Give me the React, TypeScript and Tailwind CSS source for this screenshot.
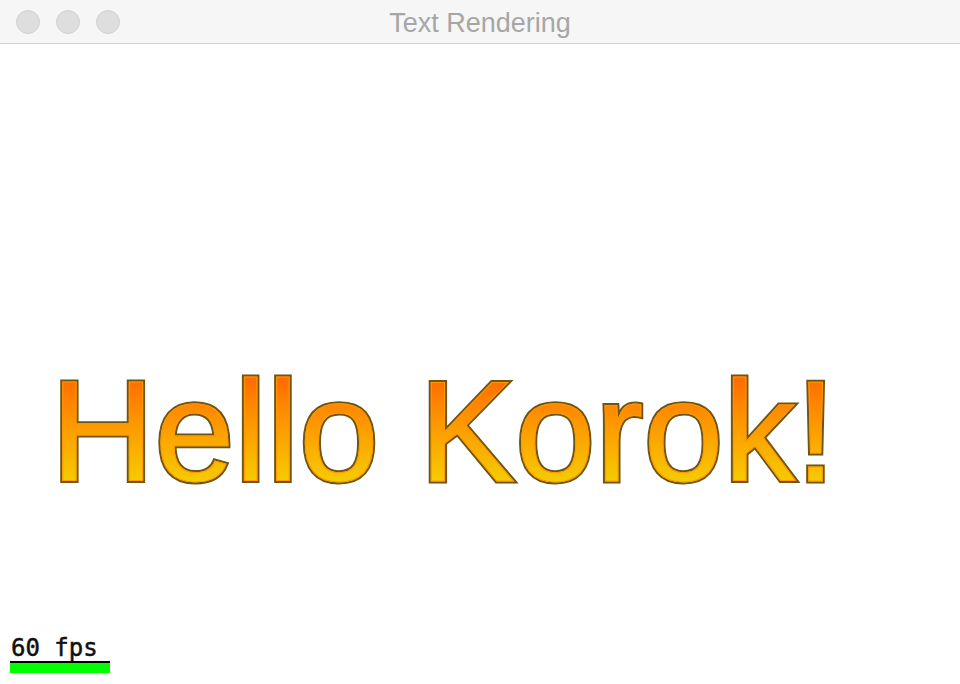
export default function App() {
  return (
    <div className="flex h-[684px] w-[960px] flex-col overflow-hidden bg-white">
      <div className="relative flex h-[44px] shrink-0 items-center border-b border-[#d3d3d3] bg-[#f6f6f6] px-[16px]">
        <div className="flex gap-[16px]">
          <span className="h-[24px] w-[24px] rounded-full border border-[#d2d2d2] bg-[#dedede]" />
          <span className="h-[24px] w-[24px] rounded-full border border-[#d2d2d2] bg-[#dedede]" />
          <span className="h-[24px] w-[24px] rounded-full border border-[#d2d2d2] bg-[#dedede]" />
        </div>
        <div className="absolute inset-x-0 top-[2px] flex h-[43px] items-center justify-center">
          <span className="font-['Liberation_Sans',Arial,sans-serif] text-[27px] leading-none text-[#a6a6a6]">
            Text Rendering
          </span>
        </div>
      </div>

      <div className="flex flex-1 flex-col">
        <div className="pl-[51px] pt-[316px]">
          {/* outline layer underneath, gradient fill on top */}
          <div className="relative inline-block font-['Liberation_Sans',Arial,sans-serif] text-[143px] leading-none tracking-[0.5px] whitespace-nowrap">
            <span className="text-[#6f5414] [-webkit-text-stroke:5px_#6f5414] blur-[0.5px]">Hello Korok!</span>
            <span className="absolute inset-0 bg-gradient-to-b from-[#ff6c00] from-[14%] to-[#f5cb00] to-[85%] bg-clip-text text-transparent [-webkit-text-stroke:1px_#ff9a00]">
              Hello Korok!
            </span>
          </div>
        </div>

        <div className="mt-auto mb-[11px] ml-[10px] flex w-[100px] flex-col">
          <span className="pl-[1px] font-['DejaVu_Sans_Mono',monospace] text-[24px] leading-[26px] text-[#111] [-webkit-text-stroke:0.5px_#111]">
            60 fps
          </span>
          <div className="h-[2px] bg-black" />
          <div className="h-[10px] bg-[#00ff00]" />
        </div>
      </div>
    </div>
  );
}
